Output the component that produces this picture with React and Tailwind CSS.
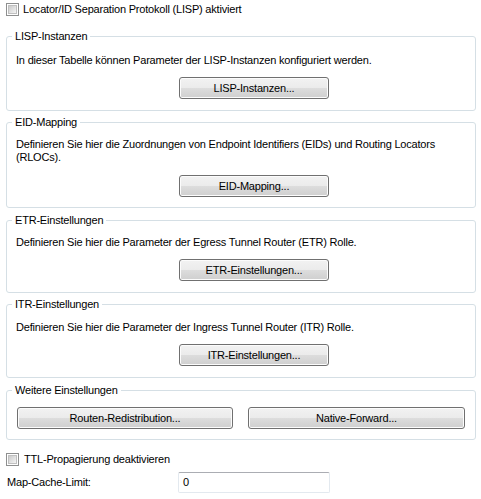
import React from "react";

const font = { fontFamily: '"Liberation Sans", Arial, sans-serif', letterSpacing: "-0.2px" };

function Checkbox() {
  return (
    <span className="inline-block w-[13px] h-[13px] border border-[#8e8f8f] bg-white p-[1px] shrink-0">
      <span className="block w-full h-full bg-gradient-to-br from-[#cbcbcb] to-[#f4f4f4] border border-[#c0c0c0]" />
    </span>
  );
}

function Btn({ children, className = "" }) {
  return (
    <button
      className={
        "h-[22px] rounded-[3px] border border-[#707070] bg-[linear-gradient(to_bottom,#f2f2f2_0%,#ebebeb_50%,#dddddd_50%,#cfcfcf_100%)] text-[11px] leading-[13px] text-black shadow-[inset_0_0_0_1px_#fcfcfc] " +
        className
      }
    >
      {children}
    </button>
  );
}

function Group({ title, children, className = "" }) {
  return (
    <fieldset className={"ml-[6px] mr-[5px] border border-[#d5dfe5] rounded-[3px] px-[9px] " + className}>
      <legend className="-ml-[4px] px-[3px] text-[11px] leading-[13px]">{title}</legend>
      {children}
    </fieldset>
  );
}

export default function App() {
  return (
    <div className="w-[481px] h-[499px] bg-white text-black text-[11px] leading-[13px] overflow-hidden" style={font}>
      <div className="flex items-center gap-[4px] pl-[6px] pt-[3px]">
        <Checkbox />
        <span>Locator/ID Separation Protokoll (LISP) aktiviert</span>
      </div>

      <Group title="LISP-Instanzen" className="mt-[14px] pb-[11px]">
        <p className="mt-[11px]">In dieser Tabelle können Parameter der LISP-Instanzen konfiguriert werden.</p>
        <Btn className="mt-[10px] ml-[163px] w-[150px]">LISP-Instanzen...</Btn>
      </Group>

      <Group title="EID-Mapping" className="mt-[5px] pb-[10px]">
        <p className="mt-[9px] pr-[10px]">
          Definieren Sie hier die Zuordnungen von Endpoint Identifiers (EIDs) und Routing Locators (RLOCs).
        </p>
        <Btn className="mt-[11px] ml-[163px] w-[150px]">EID-Mapping...</Btn>
      </Group>

      <Group title="ETR-Einstellungen" className="mt-[6px] pb-[11px]">
        <p className="mt-[9px]">Definieren Sie hier die Parameter der Egress Tunnel Router (ETR) Rolle.</p>
        <Btn className="mt-[10px] ml-[163px] w-[150px]">ETR-Einstellungen...</Btn>
      </Group>

      <Group title="ITR-Einstellungen" className="mt-[5px] pb-[11px]">
        <p className="mt-[10px]">Definieren Sie hier die Parameter der Ingress Tunnel Router (ITR) Rolle.</p>
        <Btn className="mt-[10px] ml-[163px] w-[150px]">ITR-Einstellungen...</Btn>
      </Group>

      <Group title="Weitere Einstellungen" className="mt-[6px] pb-[10px]">
        <div className="flex gap-[15px] mt-[10px] pl-[1px]">
          <Btn className="w-[216px]">Routen-Redistribution...</Btn>
          <Btn className="w-[217px]">Native-Forward...</Btn>
        </div>
      </Group>

      <div className="flex items-center gap-[5px] pl-[6px] mt-[13px]">
        <Checkbox />
        <span>TTL-Propagierung deaktivieren</span>
      </div>

      <div className="flex items-center mt-[6px] pl-[7px]">
        <span className="w-[171px]">Map-Cache-Limit:</span>
        <div className="w-[152px] h-[21px] rounded-[2px] border border-[#e3e9ef] border-t-[#abadb3] flex items-center pl-[4px]">
          0
        </div>
      </div>
    </div>
  );
}
